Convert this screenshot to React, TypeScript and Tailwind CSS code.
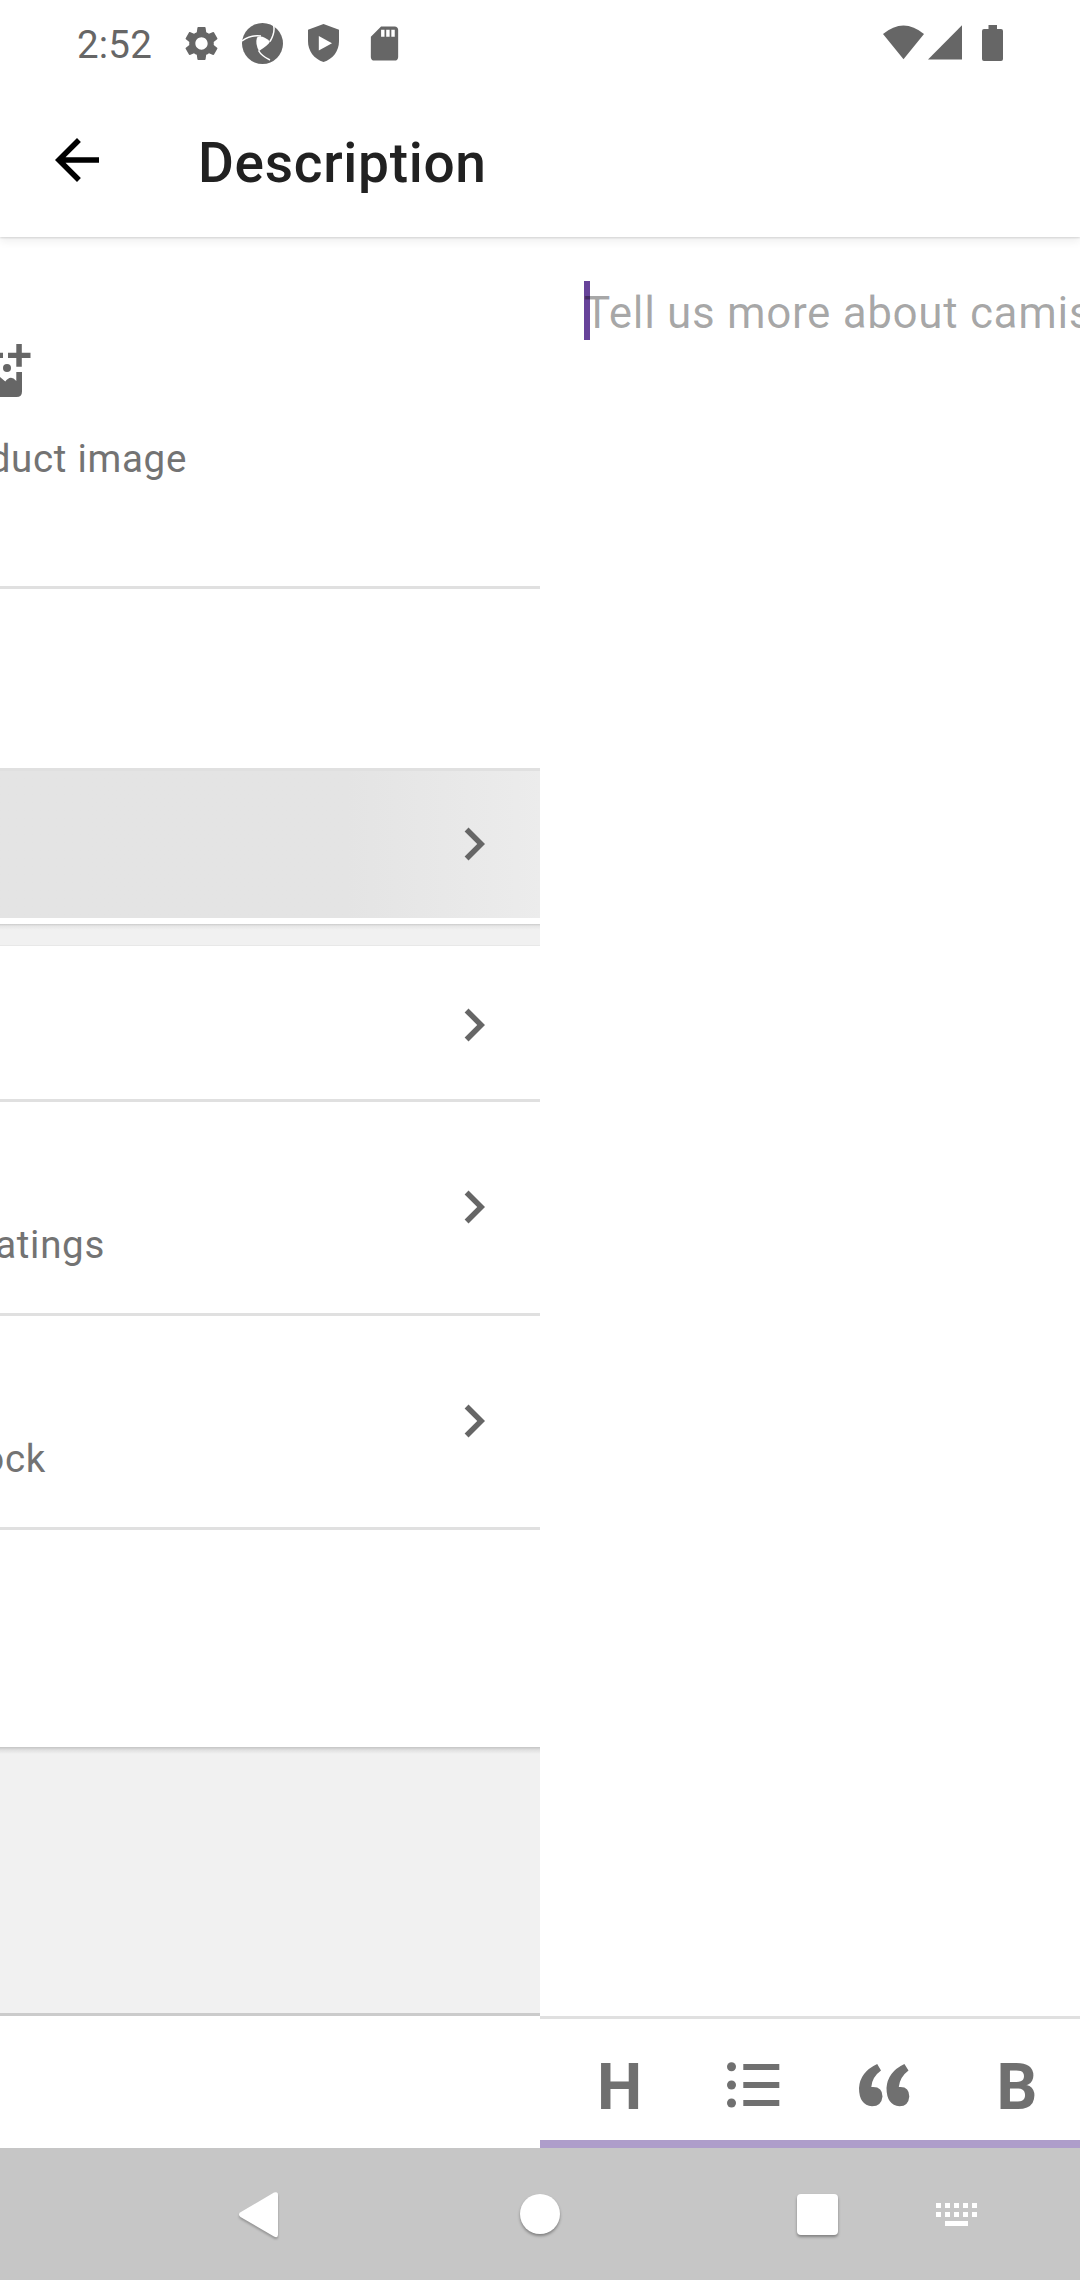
import type { ReactNode } from "react";
import { MdSettings, MdSdCard, MdArrowBack } from "react-icons/md";

function Chevron() {
  return (
    <svg className="mr-[33px] mb-[2px] size-[66px] shrink-0" viewBox="0 0 24 24" fill="#666666">
      <path d="M10 6 8.59 7.41 13.17 12l-4.58 4.59L10 18l6-6z" />
    </svg>
  );
}

function StatusBar() {
  return (
    <div className="flex h-[86px] shrink-0 items-center pl-[77px] text-[#666666]">
      <span className="w-[104px] pt-[2px] text-[38.5px] leading-[45px] tracking-[0.2px]">2:52</span>
      <MdSettings className="size-[41px]" />
      <svg className="ml-[20px] size-[41px]" viewBox="0 0 41 41">
        <circle cx="20.5" cy="20.5" r="20.5" fill="#666666" />
        <path d="M15 14.5Q20 11.500 28 18.500Q26.500 22 17 28Q13 21 15 14.5Z" fill="#fff" />
        <path
          d="M0 18Q8 11.500 19 13M31.500 2Q33.500 9 28 18.500M28 37Q19.500 33 16.500 27.500"
          fill="none"
          stroke="#fff"
          strokeWidth="1.5"
        />
      </svg>
      <svg className="ml-[24.500px] h-[38px] w-[31px]" viewBox="0 0 31 38">
        <path d="M15.5 0 31 5.800V17C31 27 25 35 15.500 38C6 35 0 27 0 17V5.800Z" fill="#666666" />
        <path d="M10.800 12v14.500L24 19.200Z" fill="#fff" />
      </svg>
      <MdSdCard className="ml-[25px] size-[41px]" />
      <svg className="ml-[478px] h-[36px] w-[121px]" viewBox="0 0 121 36" fill="#666666">
        <path d="M0 9Q20.500-8 41 9L20.500 34.300Z" />
        <path d="M45 34.500 79 .3v34.200Z" />
        <path d="M105.500 0h8.500v4h4q2 0 2 2v28q0 2-2 2h-17q-2 0-2-2V6q0-2 2-2h4.500z" />
      </svg>
    </div>
  );
}

function ImagePlusIcon() {
  return (
    <svg className="mt-[107px] block h-[53px] w-[31px]" viewBox="0 0 31 53" fill="#666666">
      <path d="M0 8.700h3V14H0zM16.300 0h5.500v8.700h8.700V14h-8.700v8.700h-5.500V14H8V8.700h8.300z" />
      <circle cx="7" cy="24" r="4" />
      <path d="M0 33Q1.500 34 5.300 37.600Q7.500 34 11 33.700Q13.500 33.700 16.300 37V28H22V47.500Q22 53 16.500 53H0Z" />
    </svg>
  );
}

function Row({ className, children }: { className: string; children?: ReactNode }) {
  return <div className={"flex shrink-0 items-center border-[#e0e0e0] " + className}>{children}</div>;
}

function CutText({ className, children }: { className: string; children: ReactNode }) {
  return (
    <span className={"flex shrink-0 justify-end whitespace-nowrap text-[38.500px] leading-[45px] tracking-[0.7px] text-[#737373] " + className}>
      {children}
    </span>
  );
}

function ProductPanel() {
  return (
    <div className="flex w-[540px] shrink-0 flex-col overflow-hidden">
      <div className="flex h-[352px] shrink-0 flex-col border-b-[3px] border-[#e0e0e0]">
        <ImagePlusIcon />
        <CutText className="mt-[39px] w-[187px]">duct image</CutText>
      </div>
      <Row className="h-[182px] border-b-[3px]" />
      <Row className="h-[147px] justify-end bg-linear-to-r from-[#e4e4e4] from-64% to-[#ececec]">
        <Chevron />
      </Row>
      <div className="h-[6px] shrink-0 bg-white" />
      <div className="h-[22px] shrink-0 border-b border-[#e8e8e8] bg-[linear-gradient(#cbcbcb,#e6e6e6_2px,#f1f1f1_6px)]" />
      <Row className="h-[156px] justify-end border-b-[3px] pt-[6px]">
        <Chevron />
      </Row>
      <Row className="h-[214px] justify-between border-b-[3px]">
        <CutText className="w-[105px] pt-[73px]">atings</CutText>
        <Chevron />
      </Row>
      <Row className="h-[214px] justify-between border-b-[3px]">
        <CutText className="w-[46px] pt-[73px]">ock</CutText>
        <Chevron />
      </Row>
      <div className="h-[217px] shrink-0" />
      <div className="h-[269px] shrink-0 border-b-[3px] border-[#cbcbcb] bg-[linear-gradient(#c4c4c4,#e0e0e0_3px,#f1f1f1_7px)]" />
      <div className="grow" />
    </div>
  );
}

function EditorPanel() {
  return (
    <div className="flex w-[540px] flex-col overflow-hidden">
      <div className="relative grow pt-[50px] pl-[44px]">
        <div className="absolute top-[44px] left-[44px] h-[59px] w-[6px] bg-[#67439a]" />
        <p className="relative whitespace-nowrap text-[44px] leading-[52px] tracking-[0.66px] text-black/35">
          Tell us more about camis
        </p>
      </div>
      <div className="flex h-[124px] shrink-0 border-t-[3px] border-[#e0e0e0] pt-[45px] text-[64px] leading-[47px] font-bold text-[#707070]">
        <span className="w-[132px] pl-[57px]">H</span>
        <svg className="ml-[54.500px] h-[45px] w-[53px] overflow-visible" viewBox="0 0 53 45" fill="currentColor">
          <circle cx="4.500" cy="2.700" r="4.500" />
          <circle cx="4.500" cy="21" r="4.500" />
          <circle cx="4.500" cy="39" r="4.500" />
          <path d="M16.300 0h36v6h-36zM16.300 18h36v6h-36zM16.300 36h36v6h-36z" />
        </svg>
        <svg className="ml-[79px] h-[43px] w-[51px]" viewBox="0 0 51 43" fill="currentColor">
          <path d="M18.200 0 22 6.500Q13 13 12.300 23Q23.500 22 23.500 32.500Q22.500 42.300 13 42.300Q0 41 0 24Q1 8 18.200 0Z" />
          <path d="M45.400 0 49.500 6.500Q40.800 13 39.800 23Q50.300 22 50.300 32.500Q49.500 42.300 40.500 42.300Q27.500 41 27.500 24Q28.500 8 45.400 0Z" />
        </svg>
        <span className="ml-[87px]">B</span>
      </div>
      <div className="h-[8px] shrink-0 bg-[#ae9dca]" />
    </div>
  );
}

function NavigationBar() {
  return (
    <div className="flex h-[132px] shrink-0 items-center bg-[#c6c6c6]">
      <svg className="mt-[2px] ml-[239px] h-[46px] w-[40px] overflow-visible drop-shadow-[0_2px_1px_rgba(0,0,0,0.25)]" viewBox="0 0 40 46" fill="#fff">
        <path d="M35 .6Q39 -1 39 3V42.500Q39 46.500 35 44.500L1.500 25Q-1.500 22.500 1.500 20.300Z" />
      </svg>
      <div className="ml-[241px] size-[40px] rounded-full bg-white shadow-[0_2px_3px_rgba(0,0,0,0.35)]" />
      <div className="mt-px ml-[237px] size-[41px] rounded-[4px] bg-white shadow-[0_2px_3px_rgba(0,0,0,0.35)]" />
      <svg className="ml-[98px] h-[23px] w-[42px]" viewBox="0 0 42 23" fill="#fff">
        {[0, 9, 18, 27, 36].map((x) => (
          <path key={x} d={`M${x} 0h5v5h-5zM${x} 9h5v5h-5z`} />
        ))}
        <path d="M9 18h23v5H9z" />
      </svg>
    </div>
  );
}

export default function App() {
  return (
    <div className="flex h-[2280px] w-[1080px] flex-col overflow-hidden bg-white font-['Roboto',sans-serif]">
      <div className="relative z-10 flex h-[237px] shrink-0 flex-col bg-white shadow-[0_1px_2px_rgba(0,0,0,0.14),0_5px_8px_rgba(0,0,0,0.06)]">
        <StatusBar />
        <div className="flex grow items-center pl-[44px]">
          <MdArrowBack className="mb-[3px] size-[66px] text-black" />
          <h1 className="mt-[2px] ml-[88px] text-[55px] leading-[64px] font-medium tracking-[0.7px] text-[#212121]">Description</h1>
        </div>
      </div>
      <div className="flex grow">
        <ProductPanel />
        <EditorPanel />
      </div>
      <NavigationBar />
    </div>
  );
}
